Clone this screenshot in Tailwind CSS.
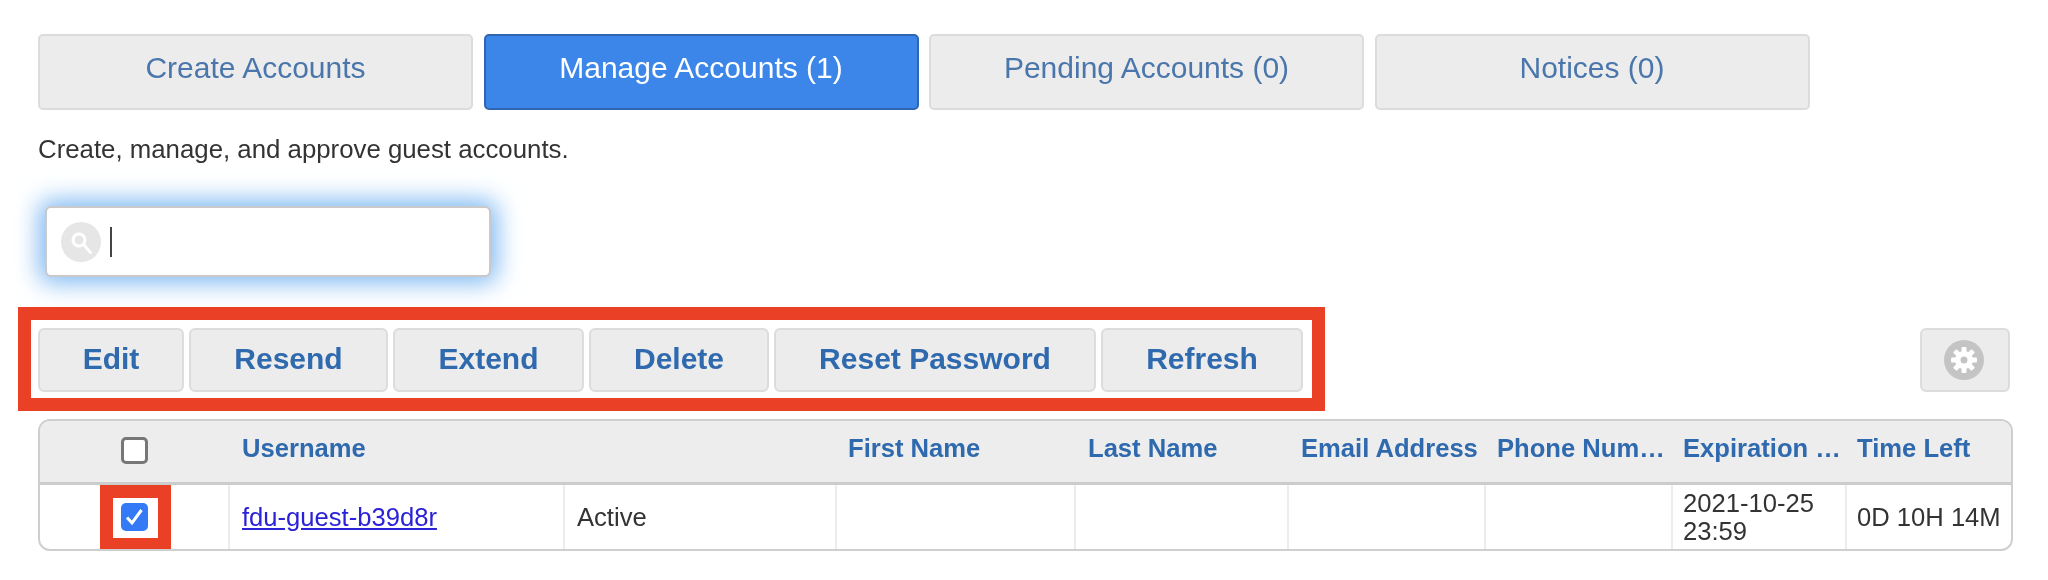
<!DOCTYPE html>
<html lang="en">
<head>
<meta charset="UTF-8">
<title>Manage Accounts</title>
<script src="https://cdn.jsdelivr.net/npm/@tailwindcss/browser@4"></script>
</head>
<body class="bg-white font-['Liberation_Sans',Arial,sans-serif] text-[#333] overflow-hidden">
<main class="w-[2048px] h-[580px] pt-[34px] pl-[38px] blur-[0.5px]">

  <!-- tabs -->
  <nav class="flex gap-[10.5px] text-[30px]">
    <a class="w-[435px] h-[76px] flex items-center justify-center pb-[9px] rounded-[5px] bg-[#ececec] border-2 border-[#dcdcdc] text-[#4a76ab]">Create Accounts</a>
    <a class="w-[435px] h-[76px] flex items-center justify-center pb-[9px] rounded-[5px] bg-[#3b86e8] border-2 border-[#2f66b3] text-white">Manage Accounts (1)</a>
    <a class="w-[435px] h-[76px] flex items-center justify-center pb-[9px] rounded-[5px] bg-[#ececec] border-2 border-[#dcdcdc] text-[#4a76ab]">Pending Accounts (0)</a>
    <a class="w-[435px] h-[76px] flex items-center justify-center pb-[9px] rounded-[5px] bg-[#ececec] border-2 border-[#dcdcdc] text-[#4a76ab]">Notices (0)</a>
  </nav>

  <p class="mt-[24px] h-[30px] text-[25.8px] leading-[30px] text-[#333]">Create, manage, and approve guest accounts.</p>

  <!-- search -->
  <div class="mt-[42px] ml-[7px] w-[446px] h-[71px] flex items-center pl-[14px] gap-[9px] bg-white border-2 border-[#c9c9c9] rounded-[6px] shadow-[0_0_24px_6px_#7fb9f3]">
    <svg class="w-[40px] h-[40px] mt-[1px]" viewBox="0 0 40 40" fill="none">
      <circle cx="20" cy="20" r="20" fill="#e6e6e6"/>
      <circle cx="18" cy="18" r="6" stroke="#fff" stroke-width="3"/>
      <path d="M23 23l6.5 7.5" stroke="#fff" stroke-width="3" stroke-linecap="round"/>
    </svg>
    <span class="w-[2px] h-[30px] bg-[#444]"></span>
  </div>

  <!-- toolbar -->
  <div class="relative mt-[51px] flex items-center h-[64px] pr-[38px]">
    <div class="flex gap-[5px] text-[30px] font-bold text-[#2f69ae]">
      <button class="w-[146px] h-[64px] pb-[3px] bg-[#ececec] border-2 border-[#dcdcdc] rounded-[6px]">Edit</button>
      <button class="w-[199px] h-[64px] pb-[3px] bg-[#ececec] border-2 border-[#dcdcdc] rounded-[6px]">Resend</button>
      <button class="w-[191px] h-[64px] pb-[3px] bg-[#ececec] border-2 border-[#dcdcdc] rounded-[6px]">Extend</button>
      <button class="w-[180px] h-[64px] pb-[3px] bg-[#ececec] border-2 border-[#dcdcdc] rounded-[6px]">Delete</button>
      <button class="w-[322px] h-[64px] pb-[3px] bg-[#ececec] border-2 border-[#dcdcdc] rounded-[6px]">Reset Password</button>
      <button class="w-[202px] h-[64px] pb-[3px] bg-[#ececec] border-2 border-[#dcdcdc] rounded-[6px]">Refresh</button>
    </div>
    <button class="ml-auto w-[90px] h-[64px] flex items-center justify-center pr-[3px] bg-[#ececec] border-2 border-[#dcdcdc] rounded-[6px]">
      <svg class="w-[40px] h-[40px]" viewBox="0 0 40 40">
        <circle cx="20" cy="20" r="20" fill="#c4c4c4"/>
        <g fill="#fff">
          <circle cx="20" cy="20" r="9"/>
          <rect x="17.5" y="7" width="5" height="26" rx="1"/>
          <rect x="17.5" y="7" width="5" height="26" rx="1" transform="rotate(45 20 20)"/>
          <rect x="17.5" y="7" width="5" height="26" rx="1" transform="rotate(90 20 20)"/>
          <rect x="17.5" y="7" width="5" height="26" rx="1" transform="rotate(135 20 20)"/>
        </g>
        <circle cx="20" cy="20" r="3.5" fill="#c4c4c4"/>
      </svg>
    </button>
    <!-- annotation -->
    <div class="absolute left-[-20px] top-[-21px] w-[1307px] h-[104px] border-[13px] border-[#ea4025]"></div>
  </div>

  <!-- table -->
  <div class="mt-[27px] w-[1975px] border-2 border-[#cfcfcf] rounded-[12px] overflow-hidden text-[25.6px]">
    <table class="w-full table-fixed border-separate border-spacing-0">
      <colgroup>
        <col class="w-[188px]"><col class="w-[335px]"><col class="w-[272px]"><col class="w-[239px]"><col class="w-[213px]"><col class="w-[197px]"><col class="w-[187px]"><col class="w-[174px]">
      </colgroup>
      <thead class="bg-[#ededed] text-[#2f69ae]">
        <tr class="h-[64px] text-left font-bold">
          <th class="border-b-[3px] border-[#cccccc]">
            <div class="flex justify-center pb-[2px]"><span class="block w-[27px] h-[27px] bg-white border-[3px] border-[#777] rounded-[5px]"></span></div>
          </th>
          <th class="pl-[14px] pb-[7px] border-b-[3px] border-[#cccccc]">Username</th>
          <th class="border-b-[3px] border-[#cccccc]"></th>
          <th class="pl-[13px] pb-[7px] border-b-[3px] border-[#cccccc]">First Name</th>
          <th class="pl-[14px] pb-[7px] border-b-[3px] border-[#cccccc]">Last Name</th>
          <th class="pl-[14px] pb-[7px] border-b-[3px] border-[#cccccc] whitespace-nowrap">Email Address</th>
          <th class="pl-[13px] pr-[5px] pb-[7px] border-b-[3px] border-[#cccccc] truncate">Phone Number</th>
          <th class="pl-[12px] pr-[2px] pb-[7px] border-b-[3px] border-[#cccccc] truncate">Expiration Date</th>
          <th class="pl-[12px] pb-[7px] border-b-[3px] border-[#cccccc] whitespace-nowrap">Time Left</th>
        </tr>
      </thead>
      <tbody class="text-[#333]">
        <tr class="h-[64px]">
          <td class="relative p-0">
            <div class="flex justify-center">
              <span class="block w-[27px] h-[28px] bg-[#3479f6] rounded-[5px]">
                <svg class="w-[27px] h-[28px]" viewBox="0 0 27 28" fill="none"><path d="M6 14.5l5 5.5L20.5 7" stroke="#fff" stroke-width="3"/></svg>
              </span>
            </div>
            <div class="absolute left-[60px] top-0 w-[71px] h-[66px] border-[13px] border-[#ea4025]"></div>
          </td>
          <td class="px-[12px] border-l-2 border-[#ececec]"><a class="text-[#2a22d6] underline whitespace-nowrap">fdu-guest-b39d8r</a></td>
          <td class="px-[12px] border-l-2 border-[#ececec]">Active</td>
          <td class="border-l-2 border-[#ececec]"></td>
          <td class="border-l-2 border-[#ececec]"></td>
          <td class="border-l-2 border-[#ececec]"></td>
          <td class="border-l-2 border-[#ececec]"></td>
          <td class="pl-[10px] pr-[8px] border-l-2 border-[#ececec] leading-[28px]">2021-10-25 23:59</td>
          <td class="pl-[10px] border-l-2 border-[#ececec] whitespace-nowrap">0D 10H 14M</td>
        </tr>
      </tbody>
    </table>
  </div>
</main>
</body>
</html>
